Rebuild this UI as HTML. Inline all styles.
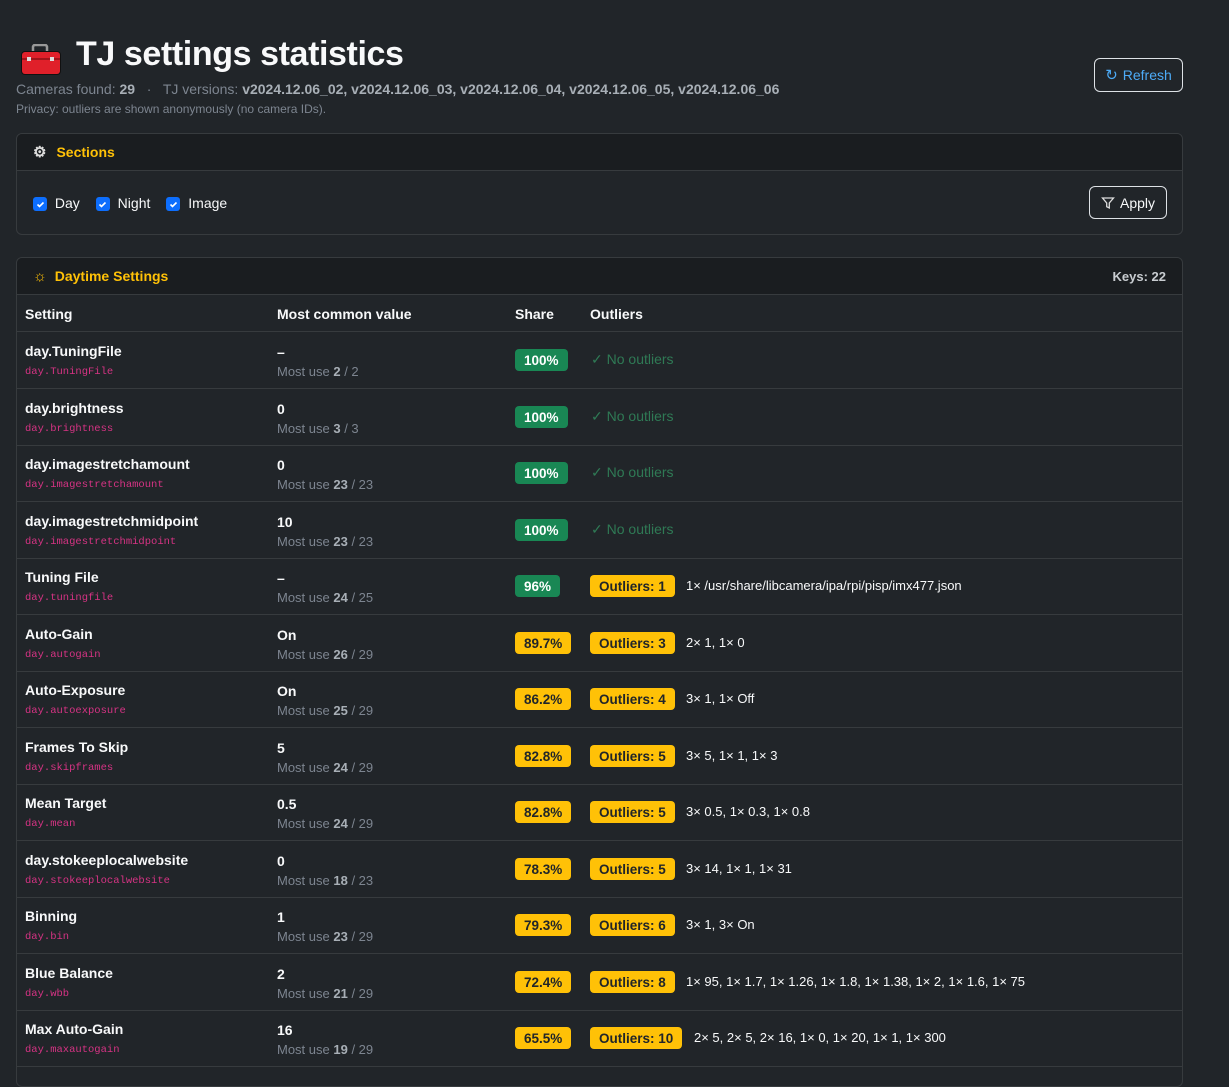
<!DOCTYPE html>
<html><head><meta charset="utf-8"><style>
*{box-sizing:border-box;margin:0;padding:0}
body{width:1229px;height:1076px;overflow:hidden;background:#212529;color:#dee2e6;font-family:"Liberation Sans",sans-serif;font-size:14px;position:relative}
.abs{position:absolute}
h1{position:absolute;left:76px;top:35px;font-size:34px;font-weight:bold;color:#f8f9fa;letter-spacing:-0.4px}
.sub{position:absolute;left:16px;color:#7d8590;font-size:14px}
.sub b{color:#a8afb6}
.btn{position:absolute;border:1px solid #dee2e6;border-radius:6px;display:flex;align-items:center;justify-content:center;gap:5px;font-size:14px}
.card{position:absolute;left:16px;width:1167px;border:1px solid #373b3e;border-radius:6px;background:#212529;overflow:hidden}
.ch{height:37px;background:#1a1d20;border-bottom:1px solid #373b3e;display:flex;align-items:center;padding-left:16px;color:#ffc107;font-weight:bold;font-size:14px;gap:8px}
.cb{width:14px;height:14px;background:#0d6efd;border-radius:3px;display:inline-flex;align-items:center;justify-content:center;vertical-align:middle;margin-right:4px}
.row{position:absolute;left:0;width:1167px;height:57px;border-bottom:1px solid #373b3e}
.n{position:absolute;left:8px;top:11px;color:#f8f9fa;font-weight:bold;font-size:14px}
.k{position:absolute;left:8px;top:34px;color:#d63384;font-family:"Liberation Mono",monospace;font-size:10.5px}
.v{position:absolute;left:260px;top:12px;color:#f8f9fa;font-weight:bold}
.m{position:absolute;left:260px;top:32px;color:#7d8590;font-size:13px}
.m b{color:#a8afb6}
.bd{position:absolute;top:17px;height:22px;border-radius:4px;font-weight:bold;font-size:13.5px;display:flex;align-items:center;padding:0 9px}
.g{background:#198754;color:#fff;left:498px}
.y{background:#ffc107;color:#212529;left:498px}
.o{left:573px}
.no{position:absolute;left:574px;top:19px;color:#2f7a55;font-size:14px}
.t{position:absolute;top:20px;color:#f8f9fa;font-size:13px}
</style></head><body>
<svg class="abs" style="left:20px;top:44px" width="42" height="32" viewBox="0 0 42 32"><rect x="13" y="1" width="14" height="8" rx="2" fill="none" stroke="#999" stroke-width="2.5"/><rect x="1" y="7" width="40" height="24" rx="4" fill="#111"/><rect x="2" y="8" width="38" height="22" rx="3" fill="#e0202a"/><rect x="2" y="14" width="38" height="2" fill="#a0141a"/><rect x="7" y="13" width="4" height="4" fill="#ddd"/><rect x="30" y="13" width="4" height="4" fill="#ddd"/></svg>
<h1>TJ settings statistics</h1>
<div class="sub" style="top:81px">Cameras found: <b>29</b> &nbsp; · &nbsp; TJ versions: <b>v2024.12.06_02, v2024.12.06_03, v2024.12.06_04, v2024.12.06_05, v2024.12.06_06</b></div>
<div class="sub" style="top:102px;font-size:12px">Privacy: outliers are shown anonymously (no camera IDs).</div>
<div class="btn" style="left:1094px;top:58px;width:89px;height:34px;color:#4dabf7"><span style="font-size:15px">↻</span>Refresh</div>

<div class="card" style="top:133px;height:102px">
<div class="ch"><span style="color:#ddd;font-size:15px">⚙</span><span style="margin-left:2px">Sections</span></div>
<div class="abs" style="left:16px;top:61px;display:flex;gap:16px;align-items:center;color:#f8f9fa">
<span><span class="cb"><svg width="9" height="9" viewBox="0 0 9 9"><path d="M1.5 4.5l2 2 4-4" stroke="#fff" stroke-width="1.6" fill="none"/></svg></span> Day</span>
<span><span class="cb"><svg width="9" height="9" viewBox="0 0 9 9"><path d="M1.5 4.5l2 2 4-4" stroke="#fff" stroke-width="1.6" fill="none"/></svg></span> Night</span>
<span><span class="cb"><svg width="9" height="9" viewBox="0 0 9 9"><path d="M1.5 4.5l2 2 4-4" stroke="#fff" stroke-width="1.6" fill="none"/></svg></span> Image</span>
</div>
<div class="btn" style="left:1072px;top:52px;width:78px;height:33px;color:#f8f9fa"><svg width="14" height="14" viewBox="0 0 14 14"><path d="M1.5 2h11l-4.2 5v5l-2.6-1.3V7z" fill="none" stroke="#ddd" stroke-width="1.3"/></svg>Apply</div>
</div>

<div class="card" style="top:257px;height:830px">
<div class="ch"><span style="font-size:15px">☼</span><span>Daytime Settings</span><span style="margin-left:auto;margin-right:16px;color:#c8ccd0;font-size:13px">Keys: 22</span></div>
<div class="row" style="top:37px;height:37px"><span class="n" style="top:11px">Setting</span><span class="v" style="top:11px">Most common value</span><span class="abs" style="left:498px;top:11px;font-weight:bold;color:#f8f9fa">Share</span><span class="abs" style="left:573px;top:11px;font-weight:bold;color:#f8f9fa">Outliers</span></div>

<div class="row" style="top:74px"><span class="n">day.TuningFile</span><span class="k">day.TuningFile</span><span class="v">–</span><span class="m">Most use <b>2</b> / 2</span><span class="bd g">100%</span><span class="no">✓ No outliers</span></div>
<div class="row" style="top:131px"><span class="n">day.brightness</span><span class="k">day.brightness</span><span class="v">0</span><span class="m">Most use <b>3</b> / 3</span><span class="bd g">100%</span><span class="no">✓ No outliers</span></div>
<div class="row" style="top:187px"><span class="n">day.imagestretchamount</span><span class="k">day.imagestretchamount</span><span class="v">0</span><span class="m">Most use <b>23</b> / 23</span><span class="bd g">100%</span><span class="no">✓ No outliers</span></div>
<div class="row" style="top:244px"><span class="n">day.imagestretchmidpoint</span><span class="k">day.imagestretchmidpoint</span><span class="v">10</span><span class="m">Most use <b>23</b> / 23</span><span class="bd g">100%</span><span class="no">✓ No outliers</span></div>
<div class="row" style="top:300px"><span class="n">Tuning File</span><span class="k">day.tuningfile</span><span class="v">–</span><span class="m">Most use <b>24</b> / 25</span><span class="bd g">96%</span><span class="bd y o">Outliers: 1</span><span class="t" style="left:669px">1× /usr/share/libcamera/ipa/rpi/pisp/imx477.json</span></div>
<div class="row" style="top:357px"><span class="n">Auto-Gain</span><span class="k">day.autogain</span><span class="v">On</span><span class="m">Most use <b>26</b> / 29</span><span class="bd y">89.7%</span><span class="bd y o">Outliers: 3</span><span class="t" style="left:669px">2× 1, 1× 0</span></div>
<div class="row" style="top:413px"><span class="n">Auto-Exposure</span><span class="k">day.autoexposure</span><span class="v">On</span><span class="m">Most use <b>25</b> / 29</span><span class="bd y">86.2%</span><span class="bd y o">Outliers: 4</span><span class="t" style="left:669px">3× 1, 1× Off</span></div>
<div class="row" style="top:470px"><span class="n">Frames To Skip</span><span class="k">day.skipframes</span><span class="v">5</span><span class="m">Most use <b>24</b> / 29</span><span class="bd y">82.8%</span><span class="bd y o">Outliers: 5</span><span class="t" style="left:669px">3× 5, 1× 1, 1× 3</span></div>
<div class="row" style="top:526px"><span class="n">Mean Target</span><span class="k">day.mean</span><span class="v">0.5</span><span class="m">Most use <b>24</b> / 29</span><span class="bd y">82.8%</span><span class="bd y o">Outliers: 5</span><span class="t" style="left:669px">3× 0.5, 1× 0.3, 1× 0.8</span></div>
<div class="row" style="top:583px"><span class="n">day.stokeeplocalwebsite</span><span class="k">day.stokeeplocalwebsite</span><span class="v">0</span><span class="m">Most use <b>18</b> / 23</span><span class="bd y">78.3%</span><span class="bd y o">Outliers: 5</span><span class="t" style="left:669px">3× 14, 1× 1, 1× 31</span></div>
<div class="row" style="top:639px"><span class="n">Binning</span><span class="k">day.bin</span><span class="v">1</span><span class="m">Most use <b>23</b> / 29</span><span class="bd y">79.3%</span><span class="bd y o">Outliers: 6</span><span class="t" style="left:669px">3× 1, 3× On</span></div>
<div class="row" style="top:696px"><span class="n">Blue Balance</span><span class="k">day.wbb</span><span class="v">2</span><span class="m">Most use <b>21</b> / 29</span><span class="bd y">72.4%</span><span class="bd y o">Outliers: 8</span><span class="t" style="left:669px">1× 95, 1× 1.7, 1× 1.26, 1× 1.8, 1× 1.38, 1× 2, 1× 1.6, 1× 75</span></div>
<div class="row" style="top:752px"><span class="n">Max Auto-Gain</span><span class="k">day.maxautogain</span><span class="v">16</span><span class="m">Most use <b>19</b> / 29</span><span class="bd y">65.5%</span><span class="bd y o">Outliers: 10</span><span class="t" style="left:677px">2× 5, 2× 5, 2× 16, 1× 0, 1× 20, 1× 1, 1× 300</span></div>
</div>
</body></html>
